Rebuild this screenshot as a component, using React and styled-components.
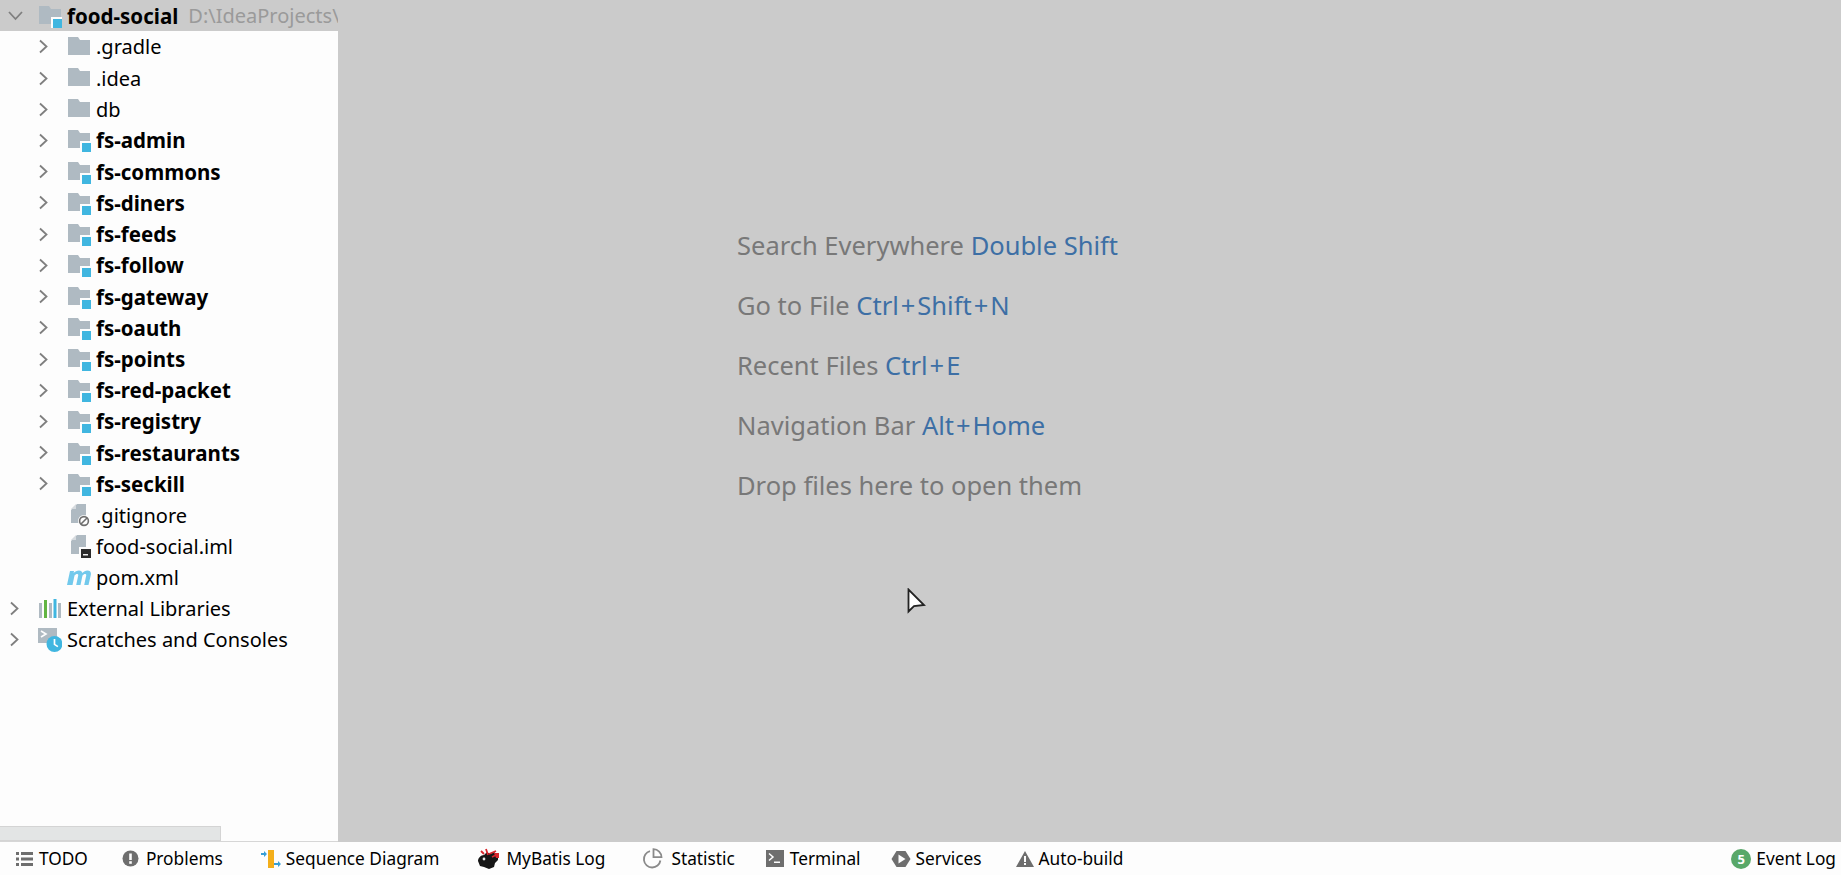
import React from "react";
import styled, { createGlobalStyle } from "styled-components";

const Global = createGlobalStyle`
  html, body { margin: 0; padding: 0; height: 100%; overflow: hidden; }
  #root { height: 100%; }
`;

const Page = styled.div`
  width: 1841px;
  height: 875px;
  display: flex;
  flex-direction: column;
  font-family: "Noto Sans", "Open Sans", sans-serif;
  color: #000;
  background: #fdfdfd;
  position: relative;
  overflow: hidden;
`;

const Body = styled.div`
  flex: 1;
  min-height: 0;
  display: flex;
`;

const TreePanel = styled.div`
  width: 338px;
  flex: none;
  display: flex;
  flex-direction: column;
  background: #fdfdfd;
`;

const Tree = styled.div`
  flex: 1;
  min-height: 0;
  overflow: hidden;
`;

const Row = styled.div`
  height: 31.22px;
  display: flex;
  align-items: center;
  padding-left: ${(p) => 8 + p.$depth * 29}px;
  background: ${(p) => (p.$selected ? "#cbcbcb" : "transparent")};
  font-size: ${(p) => (p.$bold ? 20.5 : 20)}px;
  font-weight: ${(p) => (p.$bold ? 700 : 400)};
  white-space: nowrap;
  overflow: hidden;
`;

const Arrow = styled.span`
  width: 15px;
  height: 15px;
  flex: none;
  display: flex;
  margin-right: 15px;
`;

const IconSlot = styled.span`
  width: 24px;
  height: 24px;
  flex: none;
  display: flex;
  margin-right: 5px;
`;

const Hint = styled.span`
  margin-left: 10px;
  font-size: 20px;
  font-weight: 400;
  color: #9a9a9a;
`;

const ScrollRow = styled.div`
  height: 16px;
  flex: none;
  border-bottom: 1px solid #d6d6d6;
  box-sizing: border-box;
`;

const ScrollThumb = styled.div`
  width: 221px;
  height: 15px;
  box-sizing: border-box;
  background: #e3e5e5;
  border: 1px solid #d4d4d4;
  border-left: none;
`;

const Editor = styled.div`
  flex: 1;
  background: #cbcbcb;
  padding: 228px 0 0 399px;
  display: flex;
  flex-direction: column;
  gap: 25px;
  font-size: 25.5px;
  line-height: 35px;
`;

const Line = styled.div`
  color: #787878;
  white-space: nowrap;
`;

const Keys = styled.span`
  color: #3d6fa5;
`;

const Plus = styled.span`
  margin: 0 2px;
`;

const Cursor = styled.svg`
  position: absolute;
  left: 907px;
  top: 588px;
`;

const StatusBar = styled.div`
  height: 33px;
  flex: none;
  display: flex;
  align-items: center;
  font-size: 17.3px;
  background: #fdfdfd;
  padding-right: 5px;
`;

const Tool = styled.div`
  display: flex;
  align-items: center;
  gap: ${(p) => p.$gap}px;
  margin-left: ${(p) => p.$left}px;
  white-space: nowrap;
`;

const Spacer = styled.div`
  flex: 1;
`;

const Badge = styled.span`
  width: 20px;
  height: 20px;
  border-radius: 50%;
  background: #59a869;
  color: #fff;
  font-size: 13px;
  font-weight: 700;
  display: flex;
  align-items: center;
  justify-content: center;
`;

const Chevron = ({ open }) => (
  <svg width="15" height="15" viewBox="0 0 15 15" fill="none" stroke="#7f7f7f" strokeWidth="1.8">
    <path d={open ? "M1 4l6.5 7L14 4" : "M3 1.500l6.500 6L3 13.500"} />
  </svg>
);

const Folder = ({ module }) => (
  <svg width="24" height="24" viewBox="0 0 24 24">
    <path d="M1 2h10l2 3h10v15H1z" fill="#afbac2" />
    {module && (
      <>
        <rect x="13" y="13" width="11" height="11" fill="#fdfdfd" />
        <rect x="15" y="15" width="9" height="9" fill="#40b6e0" />
      </>
    )}
  </svg>
);

const IgnoreFile = () => (
  <svg width="24" height="24" viewBox="0 0 24 24">
    <path d="M10 1h9v19H4V7z" fill="#afbac2" />
    <path d="M4 6l5-5v5z" fill="#d5dade" />
    <circle cx="17" cy="18" r="6" fill="#fdfdfd" />
    <circle cx="17" cy="18" r="4.400" fill="none" stroke="#6e6e6e" strokeWidth="1.6" />
    <path d="M14 21l6-6" stroke="#6e6e6e" strokeWidth="1.6" />
  </svg>
);

const ModuleFile = () => (
  <svg width="24" height="24" viewBox="0 0 24 24">
    <path d="M10 1h9v19H4V7z" fill="#afbac2" />
    <path d="M4 6l5-5v5z" fill="#d5dade" />
    <rect x="12" y="13" width="12" height="11" fill="#fdfdfd" />
    <rect x="14" y="15" width="10" height="9" fill="#2b2b2b" />
    <rect x="16" y="20" width="5" height="1.500" fill="#eee" />
  </svg>
);

const MavenFile = () => (
  <svg width="24" height="24" viewBox="0 0 24 24" fill="#72c9ec">
    <path d="M0 19L3 5h4l-.4 2C8 5.500 10 4.500 12 4.500c2 0 3 1 3.400 2.500 1.400-1.600 3-2.500 5-2.500 2.800 0 4 1.800 3.400 4.500L21.500 19h-4.300l2-9.500c.2-1-.2-1.500-1-1.500-1 0-2 .6-2.700 1.500l-2 9.500H9.200l2-9.500c.2-1-.2-1.500-1-1.500-1 0-2 .6-2.700 1.500l-2 9.500z" />
  </svg>
);

const Libraries = () => (
  <svg width="24" height="24" viewBox="0 0 24 24">
    <rect x="1" y="6" width="3" height="15" fill="#afbac2" />
    <rect x="6" y="3" width="3" height="18" fill="#62b543" />
    <rect x="11" y="6" width="3" height="15" fill="#afbac2" />
    <rect x="15.500" y="2" width="3" height="19" fill="#40b6e0" />
    <rect x="20" y="6" width="3" height="15" fill="#afbac2" />
  </svg>
);

const Scratches = () => (
  <svg width="24" height="24" viewBox="0 0 24 24">
    <path d="M0 0h19v15H0z" fill="#afbac2" />
    <path d="M3 3l5 3-5 3" fill="none" stroke="#fdfdfd" strokeWidth="1.6" />
    <circle cx="16.500" cy="16" r="8" fill="#40b6e0" />
    <path d="M16.500 11v5.400l3.400 2.200" fill="none" stroke="#fff" strokeWidth="1.7" />
  </svg>
);

const TodoIcon = () => (
  <svg width="17" height="14" viewBox="0 0 17 14" fill="#6e6e6e">
    <path d="M0 0h3v3H0zM5 0h12v3H5zM0 5.500h3v3H0zM5 5.500h12v3H5zM0 11h3v3H0zM5 11h12v3H5z" />
  </svg>
);

const ProblemsIcon = () => (
  <svg width="17" height="17" viewBox="0 0 17 17">
    <circle cx="8.500" cy="8.500" r="8" fill="#6e6e6e" />
    <rect x="7.200" y="3.500" width="2.600" height="6.500" fill="#fdfdfd" />
    <rect x="7.200" y="11.200" width="2.600" height="2.600" fill="#fdfdfd" />
  </svg>
);

const SequenceIcon = () => (
  <svg width="20" height="20" viewBox="0 0 20 20">
    <rect x="7" y="1" width="6" height="18" fill="#f4af1b" />
    <path d="M0 4h3V2l3 3-3 3V6H0z" fill="#389fd6" />
    <path d="M13 14h4v-2l3 3-3 3v-2h-4z" fill="#389fd6" />
  </svg>
);

const MyBatisIcon = () => (
  <svg width="24" height="22" viewBox="0 0 24 22">
    <path d="M2 13c0-3 3-6 6-6l3-3 3 2 4-2 4 3 0 5-3 3-1 4-5 2-5-2-4-1z" fill="#161616" />
    <path d="M5 3l3 3M10 1l2 6M13 6l7-3M16 9l6-3" stroke="#d8262c" strokeWidth="1.8" fill="none" />
    <path d="M18 5h5v5h-3z" fill="#d8262c" />
    <circle cx="8" cy="11" r="1.400" fill="#e8e8e8" />
  </svg>
);

const StatisticIcon = () => (
  <svg width="21" height="21" viewBox="0 0 21 21" fill="none" stroke="#8a8a8a" strokeWidth="1.8">
    <path d="M8 3.200A8.300 8.300 0 1 0 18.400 12.500" />
    <path d="M11.500 1.200a8 8 0 0 1 8 8h-8z" />
  </svg>
);

const TerminalIcon = () => (
  <svg width="18" height="17" viewBox="0 0 18 17">
    <rect width="18" height="17" fill="#6e6e6e" />
    <path d="M3 3.500l4 3.500-4 3.500" fill="none" stroke="#fdfdfd" strokeWidth="1.500" />
    <rect x="8" y="11.500" width="6" height="1.500" fill="#fdfdfd" />
  </svg>
);

const ServicesIcon = () => (
  <svg width="20" height="20" viewBox="0 0 20 20">
    <path d="M5.500 2h9l5 8-5 8h-9l-5-8z" fill="#6e6e6e" />
    <path d="M7.500 5.500l7 4.500-7 4.500z" fill="#fdfdfd" />
  </svg>
);

const WarnIcon = () => (
  <svg width="18" height="16" viewBox="0 0 18 16">
    <path d="M9 0l9 16H0z" fill="#6e6e6e" />
    <rect x="8" y="5" width="2" height="6" fill="#fdfdfd" />
    <rect x="8" y="12" width="2" height="2" fill="#fdfdfd" />
  </svg>
);

const rows = [
  { name: ".gradle", icon: <Folder />, arrow: true },
  { name: ".idea", icon: <Folder />, arrow: true },
  { name: "db", icon: <Folder />, arrow: true },
  ...[
    "fs-admin", "fs-commons", "fs-diners", "fs-feeds", "fs-follow", "fs-gateway",
    "fs-oauth", "fs-points", "fs-red-packet", "fs-registry", "fs-restaurants", "fs-seckill",
  ].map((name) => ({ name, icon: <Folder module />, arrow: true, bold: true })),
  { name: ".gitignore", icon: <IgnoreFile /> },
  { name: "food-social.iml", icon: <ModuleFile /> },
  { name: "pom.xml", icon: <MavenFile /> },
];

const hints = [
  ["Search Everywhere", ["Double Shift"]],
  ["Go to File", ["Ctrl", "Shift", "N"]],
  ["Recent Files", ["Ctrl", "E"]],
  ["Navigation Bar", ["Alt", "Home"]],
  ["Drop files here to open them", null],
];

export default function App() {
  return (
    <Page>
      <Global />
      <Body>
        <TreePanel>
          <Tree>
            <Row $depth={0} $selected $bold>
              <Arrow><Chevron open /></Arrow>
              <IconSlot><Folder module /></IconSlot>
              food-social
              <Hint>D:\IdeaProjects\</Hint>
            </Row>
            {rows.map((r) => (
              <Row key={r.name} $depth={1} $bold={r.bold}>
                <Arrow>{r.arrow && <Chevron />}</Arrow>
                <IconSlot>{r.icon}</IconSlot>
                {r.name}
              </Row>
            ))}
            <Row $depth={0}>
              <Arrow><Chevron /></Arrow>
              <IconSlot><Libraries /></IconSlot>
              External Libraries
            </Row>
            <Row $depth={0}>
              <Arrow><Chevron /></Arrow>
              <IconSlot><Scratches /></IconSlot>
              Scratches and Consoles
            </Row>
          </Tree>
          <ScrollRow><ScrollThumb /></ScrollRow>
        </TreePanel>
        <Editor>
          {hints.map(([label, keys]) => (
            <Line key={label}>
              {label}{" "}
              {keys && (
                <Keys>
                  {keys.map((k, i) => (
                    <React.Fragment key={k}>
                      {i > 0 && <Plus>+</Plus>}
                      {k}
                    </React.Fragment>
                  ))}
                </Keys>
              )}
            </Line>
          ))}
        </Editor>
      </Body>
      <StatusBar>
        <Tool $left={16} $gap={6}><TodoIcon />TODO</Tool>
        <Tool $left={34} $gap={7}><ProblemsIcon />Problems</Tool>
        <Tool $left={38} $gap={5}><SequenceIcon />Sequence Diagram</Tool>
        <Tool $left={37} $gap={6}><MyBatisIcon />MyBatis Log</Tool>
        <Tool $left={37} $gap={8}><StatisticIcon />Statistic</Tool>
        <Tool $left={31} $gap={6}><TerminalIcon />Terminal</Tool>
        <Tool $left={30} $gap={5}><ServicesIcon />Services</Tool>
        <Tool $left={34} $gap={5}><WarnIcon />Auto-build</Tool>
        <Spacer />
        <Tool $left={0} $gap={5}><Badge>5</Badge>Event Log</Tool>
      </StatusBar>
      <Cursor width="20" height="26" viewBox="0 0 20 26">
        <path d="M1.500 1.500v22l5.500-5.500 10-1z" fill="#fff" stroke="#222" strokeWidth="1.8" />
      </Cursor>
    </Page>
  );
}
